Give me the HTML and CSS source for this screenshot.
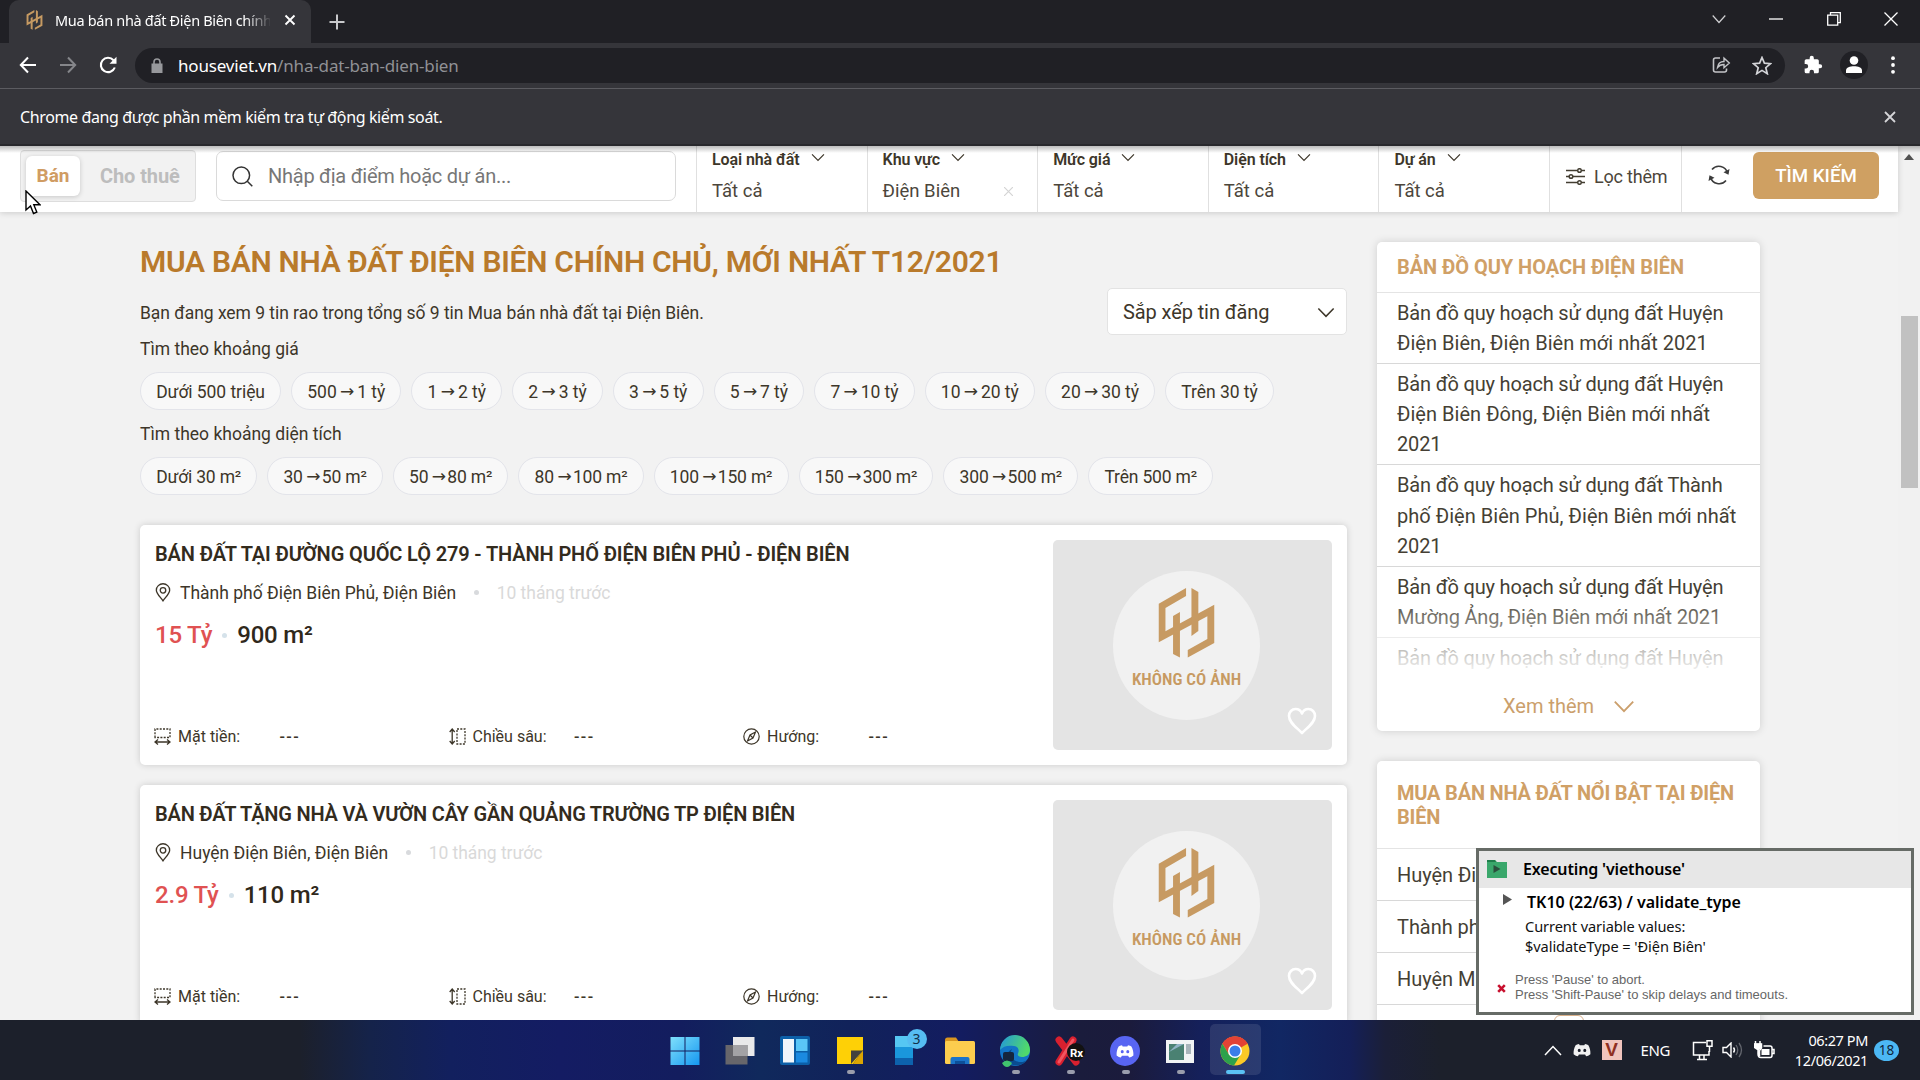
FILE: index.html
```html
<!DOCTYPE html>
<html lang="vi">
<head>
<meta charset="utf-8">
<title>Mua bán nhà đất Điện Biên chính chủ</title>
<link rel="stylesheet" href="styles.css">
</head>
<body>
<svg class="defs" aria-hidden="true">
  <symbol id="logo" viewBox="0 0 55.5 70"><path d="M27.3 0 0 15.700V54.300L48.600 28.300V51L29 62v7.500L55.500 55V16.700L6.700 43.300V20L27.300 8z"/><path d="M14.300 28l6.900-4v45.500l-6.900-3.500z"/><path d="M32.700 0l6.900 4v39l-6.900 5z"/></symbol>
  <symbol id="chev" viewBox="0 0 20 12"><path d="M1.5 1.5 10 10.3 18.5 1.5" fill="none" stroke="currentColor" stroke-width="1.7"/></symbol>
  <symbol id="pin" viewBox="0 0 16 20"><path d="M8 18.800C5 14.600 1 11 1 7.500a7 6.700 0 0 1 14 0C15 11 11 14.600 8 18.800z" fill="none" stroke="currentColor" stroke-width="1.4"/><circle cx="8" cy="7.700" r="2.900" fill="none" stroke="currentColor" stroke-width="1.4"/></symbol>
  <symbol id="front" viewBox="0 0 17 17"><path d="M1 9.500V1h15v8.500z" fill="none" stroke="currentColor" stroke-width="1.3" stroke-dasharray="2 1.300"/><path d="M1 14h15M4 11.500 1 14l3 2.500M13 11.500l3 2.500-3 2.500" fill="none" stroke="currentColor" stroke-width="1.300"/></symbol>
  <symbol id="depth" viewBox="0 0 17 17"><path d="M8 1h8v15H8z" fill="none" stroke="currentColor" stroke-width="1.3" stroke-dasharray="2 1.300"/><path d="M3.200 1v15M.7 4l2.500-3 2.500 3M.7 13l2.500 3 2.500-3" fill="none" stroke="currentColor" stroke-width="1.300"/></symbol>
  <symbol id="compass" viewBox="0 0 17 17"><circle cx="8.500" cy="8.500" r="7.700" fill="none" stroke="currentColor" stroke-width="1.200"/><path d="M12.500 4 7 7l-2.500 6L10 10zM7 7l3 3" fill="none" stroke="currentColor" stroke-width="1.200"/></symbol>
  <symbol id="heart" viewBox="0 0 30 28"><path d="M15 26C9 20 2 15.500 2 9c0-4 3-7 6.500-7C11.500 2 14 4 15 6.500 16 4 18.500 2 21.500 2 25 2 28 5 28 9c0 6.500-7 11-13 17z" fill="none" stroke="#fff" stroke-width="2.600" stroke-linejoin="round"/></symbol>
  <symbol id="discord" viewBox="0 0 24 18"><path d="M8 1C6 1.300 4.500 2 3.500 2.500 1.500 6 .5 10 .8 14.500c2 1.600 4 2.400 5.700 2.800l1.400-2.200h8.200l1.400 2.200c1.700-.4 3.700-1.200 5.700-2.800.3-4.500-.7-8.500-2.700-12C19.500 2 18 1.300 16 1l-.9 1.700H8.900zM8.300 7.300a2 2.200 0 1 1 0 4.400 2 2.200 0 0 1 0-4.400zm7.400 0a2 2.200 0 1 1 0 4.400 2 2.200 0 0 1 0-4.400z" fill-rule="evenodd"/></symbol>
</svg>

<div class="tabstrip">
  <div class="tab">
    <svg class="tab-logo" width="17" height="20"><use href="#logo"/></svg>
    <span class="tab-title">Mua bán nhà đất Điện Biên chính</span>
    <svg width="12" height="12" viewBox="0 0 12 12"><path d="m1.500 1.500 9 9m0-9-9 9" stroke="#fff" stroke-width="1.900"/></svg>
  </div>
  <svg class="newtab" width="16" height="16" viewBox="0 0 16 16"><path d="M8 .5v15M.5 8h15" stroke="#c8c9cc" stroke-width="2"/></svg>
  <div class="wincontrols">
    <svg width="14" height="14" viewBox="0 0 14 14"><path d="m.7 3.500 6.300 7 6.300-7" fill="none" stroke="#d0d0d3" stroke-width="1.200"/></svg>
    <svg width="14" height="14" viewBox="0 0 14 14"><path d="M0 7h14" stroke="#fff" stroke-width="1.300"/></svg>
    <svg width="14" height="14" viewBox="0 0 14 14"><path d="M.7 3.200h10v10h-10zM3.500 3V.7h9.800v10H11" fill="none" stroke="#fff" stroke-width="1.300"/></svg>
    <svg width="14" height="14" viewBox="0 0 14 14"><path d="m.5.5 13 13m0-13-13 13" stroke="#fff" stroke-width="1.300"/></svg>
  </div>
</div>

<div class="toolbar">
  <div class="nav">
    <svg width="18" height="18" viewBox="0 0 18 18"><path d="M17 9H2m7-7.500L1.800 9 9 16.500" fill="none" stroke="#fff" stroke-width="2"/></svg>
    <svg width="18" height="18" viewBox="0 0 18 18"><path d="M1 9h15M9 1.500 16.200 9 9 16.500" fill="none" stroke="#85868a" stroke-width="2"/></svg>
    <svg width="18" height="18" viewBox="0 0 18 18"><path d="M15.800 11.500A7.200 7.200 0 1 1 14.500 4.200" fill="none" stroke="#fff" stroke-width="2.100"/><path d="M17.500.8v7h-7z" fill="#fff"/></svg>
  </div>
  <div class="omnibox">
    <svg width="12" height="15" viewBox="0 0 12 15"><path d="M.5 5.500h11V15H.5z" fill="#97989c"/><path d="M3 6V4a3 3 0 0 1 6 0v2" fill="none" stroke="#97989c" stroke-width="1.600"/></svg>
    <span class="url"><b>houseviet.vn</b>/nha-dat-ban-dien-bien</span>
    <svg class="share" width="19" height="18" viewBox="0 0 19 18"><path d="M8 2H3.500Q1.500 2 1.500 4v10q0 2 2 2h9q2 0 2-2v-1.500" fill="none" stroke="#c3c4c8" stroke-width="1.600"/><path d="M5.500 11.500C6 7.500 8.500 5.500 12 5.500V2.200l5.300 4.800-5.300 4.700V8.500c-3 0-5 1-6.500 3z" fill="none" stroke="#c3c4c8" stroke-width="1.400"/></svg>
    <svg width="20" height="19" viewBox="0 0 20 19"><path d="m10 1.500 2.400 5.700 6.100.5-4.700 4 1.500 6-5.300-3.300-5.300 3.300 1.500-6-4.700-4 6.100-.5z" fill="none" stroke="#d3d4d8" stroke-width="1.700"/></svg>
  </div>
  <svg class="ext" width="20" height="20" viewBox="0 0 24 24"><path fill="#fff" d="M20.500 11H19V7a2 2 0 0 0-2-2h-4V3.500a2.500 2.500 0 0 0-5 0V5H4a2 2 0 0 0-2 2v3.800h1.500a2.700 2.700 0 0 1 0 5.400H2V20a2 2 0 0 0 2 2h3.800v-1.500a2.700 2.700 0 0 1 5.400 0V22H17a2 2 0 0 0 2-2v-4h1.500a2.500 2.500 0 0 0 0-5z"/></svg>
  <div class="avatar"><svg width="16" height="18" viewBox="0 0 16 18"><circle cx="8" cy="4.500" r="4.300" fill="#fff"/><path d="M0 17v-2.500C0 11.500 4 10.300 8 10.300s8 1.200 8 4.200V17z" fill="#fff"/></svg></div>
  <svg class="dots" width="4" height="18" viewBox="0 0 4 18"><circle cx="2" cy="2.200" r="1.900" fill="#fff"/><circle cx="2" cy="9" r="1.900" fill="#fff"/><circle cx="2" cy="15.800" r="1.900" fill="#fff"/></svg>
</div>

<div class="infobar">
  <span>Chrome đang được phần mềm kiểm tra tự động kiểm soát.</span>
  <svg width="12" height="12" viewBox="0 0 12 12"><path d="m1 1 10 10m0-10L1 11" stroke="#d5d5d8" stroke-width="1.800"/></svg>
</div>

<div class="viewport">
  <div class="page">
    <header class="search">
      <div class="toggle"><span class="on">Bán</span><span class="off">Cho thuê</span></div>
      <div class="query">
        <svg width="21" height="21" viewBox="0 0 21 21"><circle cx="9.300" cy="9.300" r="8.300" fill="none" stroke="#333" stroke-width="1.500"/><path d="m15.300 15.300 5 5" stroke="#333" stroke-width="1.500"/></svg>
        <span>Nhập địa điểm hoặc dự án...</span>
      </div>
      <div class="filter first"><div class="fl">Loại nhà đất<svg width="14" height="9"><use href="#chev"/></svg></div><div class="fv">Tất cả</div></div>
      <div class="filter"><div class="fl">Khu vực<svg width="14" height="9"><use href="#chev"/></svg></div><div class="fv">Điện Biên<svg class="clear" width="9" height="9" viewBox="0 0 9 9"><path d="m0 0 9 9m0-9L0 9" stroke="#d4d4d4" stroke-width="1.200"/></svg></div></div>
      <div class="filter"><div class="fl">Mức giá<svg width="14" height="9"><use href="#chev"/></svg></div><div class="fv">Tất cả</div></div>
      <div class="filter"><div class="fl">Diện tích<svg width="14" height="9"><use href="#chev"/></svg></div><div class="fv">Tất cả</div></div>
      <div class="filter"><div class="fl">Dự án<svg width="14" height="9"><use href="#chev"/></svg></div><div class="fv">Tất cả</div></div>
      <div class="more">
        <svg width="19" height="17" viewBox="0 0 19 17"><g fill="none" stroke="#433e32" stroke-width="1.500"><path d="M0 2.500h11.500M15.500 2.500H19M0 8.500h3M7 8.500h12M0 14.500h11.500M15.500 14.500H19"/><circle cx="13.500" cy="2.500" r="1.800"/><circle cx="5" cy="8.500" r="1.800"/><circle cx="13.500" cy="14.500" r="1.800"/></g></svg>
        Lọc thêm
      </div>
      <div class="reset">
        <svg width="22" height="22" viewBox="0 0 22 22"><g fill="none" stroke="#3b3b3b" stroke-width="1.600"><path d="M4 5.500A8.900 8.900 0 0 1 19.500 9M18 16.500A8.900 8.900 0 0 1 2.500 13"/></g><path d="m21.500 5-1 5.800-5-2.600zM.5 17l1-5.800 5 2.600z" fill="#3b3b3b"/></svg>
      </div>
      <div class="go">TÌM KIẾM</div>
    </header>

    <div class="content">
      <main>
        <h1>MUA BÁN NHÀ ĐẤT ĐIỆN BIÊN CHÍNH CHỦ, MỚI NHẤT T12/2021</h1>
        <div class="sub"><p>Bạn đang xem 9 tin rao trong tổng số 9 tin Mua bán nhà đất tại Điện Biên.</p>
          <div class="sort">Sắp xếp tin đăng<svg width="18" height="11"><use href="#chev"/></svg></div></div>
        <p class="lead">Tìm theo khoảng giá</p>
        <div class="chips price-chips"><span>Dưới 500 triệu</span><span>500<i>→</i>1 tỷ</span><span>1<i>→</i>2 tỷ</span><span>2<i>→</i>3 tỷ</span><span>3<i>→</i>5 tỷ</span><span>5<i>→</i>7 tỷ</span><span>7<i>→</i>10 tỷ</span><span>10<i>→</i>20 tỷ</span><span>20<i>→</i>30 tỷ</span><span>Trên 30 tỷ</span></div>
        <p class="lead second">Tìm theo khoảng diện tích</p>
        <div class="chips"><span>Dưới 30 m²</span><span>30<i>→</i>50 m²</span><span>50<i>→</i>80 m²</span><span>80<i>→</i>100 m²</span><span>100<i>→</i>150 m²</span><span>150<i>→</i>300 m²</span><span>300<i>→</i>500 m²</span><span>Trên 500 m²</span></div>

        <article class="card">
          <div class="info">
            <h2>BÁN ĐẤT TẠI ĐƯỜNG QUỐC LỘ 279 - THÀNH PHỐ ĐIỆN BIÊN PHỦ - ĐIỆN BIÊN</h2>
            <div class="loc"><svg width="16" height="19"><use href="#pin"/></svg>Thành phố Điện Biên Phủ, Điện Biên<i></i><em>10 tháng trước</em></div>
            <div class="price"><b>15 Tỷ</b><i></i>900 m²</div>
            <div class="feats">
              <div><svg width="17" height="17"><use href="#front"/></svg><span>Mặt tiền:</span><b>---</b></div>
              <div><svg width="17" height="17"><use href="#depth"/></svg><span>Chiều sâu:</span><b>---</b></div>
              <div><svg width="17" height="17"><use href="#compass"/></svg><span>Hướng:</span><b>---</b></div>
            </div>
          </div>
          <div class="photo"><div class="disc"><svg width="57" height="70"><use href="#logo"/></svg><span>KHÔNG CÓ ẢNH</span></div><svg class="fav" width="30" height="28"><use href="#heart"/></svg></div>
        </article>

        <article class="card">
          <div class="info">
            <h2 class="tight">BÁN ĐẤT TẶNG NHÀ VÀ VƯỜN CÂY GẦN QUẢNG TRƯỜNG TP ĐIỆN BIÊN</h2>
            <div class="loc"><svg width="16" height="19"><use href="#pin"/></svg>Huyện Điện Biên, Điện Biên<i></i><em>10 tháng trước</em></div>
            <div class="price"><b>2.9 Tỷ</b><i></i>110 m²</div>
            <div class="feats">
              <div><svg width="17" height="17"><use href="#front"/></svg><span>Mặt tiền:</span><b>---</b></div>
              <div><svg width="17" height="17"><use href="#depth"/></svg><span>Chiều sâu:</span><b>---</b></div>
              <div><svg width="17" height="17"><use href="#compass"/></svg><span>Hướng:</span><b>---</b></div>
            </div>
          </div>
          <div class="photo"><div class="disc"><svg width="57" height="70"><use href="#logo"/></svg><span>KHÔNG CÓ ẢNH</span></div><svg class="fav" width="30" height="28"><use href="#heart"/></svg></div>
        </article>
      </main>

      <aside>
        <section class="box">
          <h3>BẢN ĐỒ QUY HOẠCH ĐIỆN BIÊN</h3>
          <ul class="maps">
            <li>Bản đồ quy hoạch sử dụng đất Huyện<br><span class="loose">Điện Biên, Điện Biên mới nhất 2021</span></li>
            <li>Bản đồ quy hoạch sử dụng đất Huyện<br><span class="loose">Điện Biên Đông, Điện Biên mới nhất</span><br>2021</li>
            <li>Bản đồ quy hoạch sử dụng đất Thành<br><span class="loose">phố Điện Biên Phủ, Điện Biên mới nhất</span><br>2021</li>
            <li>Bản đồ quy hoạch sử dụng đất Huyện<br>Mường Ảng, Điện Biên mới nhất 2021</li>
            <li>Bản đồ quy hoạch sử dụng đất Huyện</li>
          </ul>
          <div class="expand">Xem thêm<svg width="22" height="13"><use href="#chev"/></svg></div>
        </section>
        <section class="box hot">
          <h3>MUA BÁN NHÀ ĐẤT NỔI BẬT TẠI ĐIỆN<br>BIÊN</h3>
          <ul>
            <li>Huyện Điện Biên</li>
            <li>Thành phố Điện Biên Phủ</li>
            <li>Huyện Mường Ảng</li>
          </ul>
          <div class="pager"></div>
        </section>
      </aside>
    </div>
  </div>
  <div class="scroll"><svg width="10" height="6" viewBox="0 0 10 6"><path d="m0 6 5-6 5 6z" fill="#505050"/></svg><div class="thumb"></div></div>
</div>

<footer class="taskbar">
  <div class="apps">
    <div><svg width="30" height="30" viewBox="0 0 30 30"><defs><linearGradient id="w" x1="0" y1="0" x2="1" y2="1"><stop offset="0" stop-color="#7fe0fc"/><stop offset="1" stop-color="#1597f0"/></linearGradient></defs><path d="M.5 1h14v13.500H.5zM15.500 1h14v13.500h-14zM.5 15.500h14V29H.5zM15.500 15.500h14V29h-14z" fill="url(#w)"/></svg></div>
    <div><svg width="30" height="30" viewBox="0 0 30 30"><path d="M8 1h21.500v19H8z" fill="#e9e9ea"/><path d="M.5 9h22v19.500H.5z" fill="#67666b"/><path d="M8 9h14.500v11H8z" fill="#a3a2a5"/></svg></div>
    <div><svg width="30" height="30" viewBox="0 0 30 30"><rect width="30" height="29" rx="2" fill="#0c5fa8"/><path d="M3 3h11v23.500H3z" fill="#f1f6fb"/><path d="M16 3h11.500v12H16z" fill="#5ac6f7"/><path d="M16 16.500h11.500v10H16z" fill="#1b8ae0"/></svg></div>
    <div><svg width="30" height="30" viewBox="0 0 30 30"><path d="M2 1h26v13l-10 14H2z" fill="#fed006"/><path d="M28 14v14H18z" fill="#dba502"/><path d="M16 14.500h12L16 28z" fill="#41423f"/></svg><s></s></div>
    <div><svg width="32" height="34" viewBox="0 0 32 34"><path d="M6 2h18v12H6z" fill="#56c7f3"/><path d="M6 13h18v13H6z" fill="#1a97dc"/><path d="M6 24h18v7H6z" fill="#0d62ad"/></svg><span class="count">3</span></div>
    <div><svg width="30" height="30" viewBox="0 0 30 30"><path d="M0 4q0-2.500 2.500-2.500H11L14 6v4H0z" fill="#d9961f"/><rect y="5" width="30" height="23" rx="1.500" fill="#fdcd4e"/><path d="M5.500 28v-5q0-2 2-2h15q2 0 2 2v5z" fill="#1b74c9"/><path d="M10 25h10v3H10z" fill="#0d4f99"/></svg></div>
    <div><svg width="32" height="32" viewBox="0 0 32 32"><defs><linearGradient id="e" x1="0" y1="0" x2="1" y2=".3"><stop offset="0" stop-color="#2296dc"/><stop offset="1" stop-color="#50d96b"/></linearGradient></defs><circle cx="16" cy="16" r="15" fill="#1275c6"/><path d="M1 15A15 15 0 0 1 31 15c0 5-4 7-8 7-3 0-5-1.500-4-3.500 1.500-3 .5-7-4-7.500C9 10 4 11 1 15z" fill="url(#e)"/><path d="M13 14c-3 5 0 12 7 13 4 .5 7-1 8-2-4 6-13 7-18 3-5-4-3-11 3-14z" fill="#0a4b8f"/><rect x="4" y="17" width="11" height="9" rx="2" fill="#15263d"/><path d="M3 28q5-5 10 0-2 4-5 4t-5-4z" fill="#41c46e"/></svg><s></s></div>
    <div><svg width="32" height="30" viewBox="0 0 32 30"><path d="m5 4 17 22M19 4 5 26" stroke="#d9202f" stroke-width="7" stroke-linecap="round"/><path d="M19 4 5 26" stroke="#f05560" stroke-width="3" stroke-linecap="round"/><circle cx="22" cy="16" r="9" fill="#121212"/><text x="16" y="20.500" font-family="Roboto, sans-serif" font-size="11.500" font-weight="700" fill="#fff">Rx</text></svg><s></s></div>
    <div><svg width="30" height="30" viewBox="0 0 30 30"><circle cx="15" cy="15" r="15" fill="#5865f2"/><use href="#discord" x="6" y="8.500" width="18" height="13.500" fill="#fff"/></svg><s></s></div>
    <div><svg width="28" height="26" viewBox="0 0 28 26"><path d="M0 2h28v23H0z" fill="#f1f3f4"/><path d="M3 6h15v16H3z" fill="#4a8172"/><path d="m3 14 8-8h7z" fill="#8fb3c4"/><path d="M20 6h5v10h-5z" fill="#a8b4ba"/></svg><s></s></div>
    <div class="active"><svg width="30" height="30" viewBox="0 0 30 30"><circle cx="15" cy="15" r="14.500" fill="#fbc926"/><path d="M15 15 2.400 7.800a14.500 14.500 0 0 1 25.200 0z" fill="#e34235"/><path d="M15 8h12.700A14.500 14.500 0 0 0 2.400 7.800L9 18.500z" fill="#e34235"/><path d="M2.400 7.800A14.500 14.500 0 0 0 14 29.500l7-11.500-12 .5z" fill="#2da14c"/><circle cx="15" cy="15" r="7" fill="#fff"/><circle cx="15" cy="15" r="5.500" fill="#3b7de9"/></svg><s></s></div>
  </div>
  <div class="tray">
    <svg width="18" height="11" viewBox="0 0 18 11"><path d="m1 10 8-8.500 8 8.500" fill="none" stroke="#fff" stroke-width="1.500"/></svg>
    <svg class="t-disc" width="18" height="14" fill="#f1f1f1"><use href="#discord"/></svg>
    <span class="vkey">V</span>
    <span class="lang">ENG</span>
    <svg class="t-net" width="21" height="21" viewBox="0 0 21 21"><path d="M14 2.500H1.500V15H17v-4M5 19.500h10M7.500 15v4M12 15v4" fill="none" stroke="#fff" stroke-width="1.500"/><path d="M15 .7h5v5.500h-5zM17.500 6v6" fill="none" stroke="#fff" stroke-width="1.500"/></svg>
    <svg class="t-vol" width="21" height="16" viewBox="0 0 21 16"><path d="M1 5.500h3.500L9 1v14l-4.500-4.500H1z" fill="none" stroke="#fff" stroke-width="1.400"/><path d="M11.500 5.500q2 2.500 0 5" fill="none" stroke="#fff" stroke-width="1.400"/><path d="M14 3q3.500 5 0 10M17 1q5 7 0 14" fill="none" stroke="#63666e" stroke-width="1.300"/></svg>
    <svg class="t-bat" width="21" height="18" viewBox="0 0 21 18"><path d="M1.500 0v3M6 0v3M0 3h7.500v4l-2 2.500V15M4 9v4q0 3.500 3 3.500h9q2 0 2-2V7q0-2-2-2H9.500M18.500 8.500H20v4h-1.500" fill="none" stroke="#fff" stroke-width="1.500"/><path d="M0 2.500h7.500V7L5 9H3L0 7zM7.500 8h8v6h-8z" fill="#fff"/></svg>
    <div class="clock"><span>06:27 PM</span><span>12/06/2021</span></div>
    <span class="notif">18</span>
  </div>
</footer>

<div class="popup">
  <div class="phead"><svg width="20" height="18" viewBox="0 0 20 18"><path d="M0 0h8l2 2h10v16H0z" fill="#3aa76b"/><path d="M0 0h8l1 2H0z" fill="#1f7d4b"/><path d="M6.500 5v8l7-4z" fill="#2a4f3c"/></svg><b>Executing 'viethouse'</b></div>
  <div class="pstep"><svg width="9" height="11" viewBox="0 0 9 11"><path d="M0 0v11l9-5.500z" fill="#555"/></svg><b>TK10 (22/63) / validate_type</b></div>
  <div class="pvars">Current variable values:<br>$validateType = 'Điện Biên'</div>
  <div class="phint"><svg width="9" height="9" viewBox="0 0 9 9"><path d="m1.200 1.200 6.600 6.600m0-6.600L1.200 7.800" stroke="#c8102e" stroke-width="2.600"/></svg><p>Press 'Pause' to abort.<br>Press 'Shift-Pause' to skip delays and timeouts.</p></div>
</div>
<svg class="cursor" width="16" height="25" viewBox="0 0 16 25"><path d="M1 1v19l4.500-4 3 7.500 3.300-1.400-3-7.300H15z" fill="#fff" stroke="#000" stroke-width="1.400"/></svg>
</body>
</html>
```
FILE: styles.css
```css
* { box-sizing: border-box; }
body {
  margin: 0; width: 1920px; height: 1080px; overflow: hidden;
  display: flex; flex-direction: column; position: relative;
  font-family: "Roboto", sans-serif; color: #3d3629; background: #f2f2f2;
}
h1, h2, h3, p, ul { margin: 0; padding: 0; }
ul { list-style: none; }
svg { flex: none; display: block; }
.defs { position: absolute; width: 0; height: 0; }

/* browser chrome */
.tabstrip, .toolbar, .infobar, .taskbar, .popup { font-family: "Noto Sans", "Open Sans", sans-serif; }
.tabstrip { height: 43px; background: #202025; display: flex; align-items: center; flex: none; }
.tab {
  width: 302px; height: 43px; margin-left: 9px; padding: 0 15px 3px 17px; background: #35353a;
  border-radius: 10px 10px 0 0; display: flex; align-items: center;
}
.tab-logo { fill: #c69a62; }
.tab-title {
  margin-left: 12px; width: 217px; margin-right: 14px; font-size: 14.5px; letter-spacing: -.32px;
  color: #fff; white-space: nowrap; overflow: hidden;
  -webkit-mask-image: linear-gradient(90deg, #000 88%, transparent 101%);
  mask-image: linear-gradient(90deg, #000 88%, transparent 101%);
}
.newtab { margin-left: 18px; }
.wincontrols { margin-left: auto; padding-right: 22px; padding-bottom: 6px; display: flex; gap: 43.3px; }
.toolbar { height: 45px; background: #35353a; display: flex; align-items: center; flex: none; padding-bottom: 1px; }
.nav { display: flex; gap: 22px; padding-left: 19px; width: 135px; }
.omnibox {
  width: 1650px; height: 35px; border-radius: 18px; background: #202025;
  display: flex; align-items: center; padding: 0 13px 0 16px;
}
.url { margin-left: 15px; font-size: 17px; letter-spacing: -.17px; color: #909195; }
.url b { font-weight: 400; color: #fff; }
.share { margin-left: auto; margin-right: 21px; }
.ext { margin-left: 18px; }
.avatar {
  width: 28px; height: 28px; margin-left: 17px; border-radius: 50%; background: #202025;
  display: flex; align-items: center; justify-content: center;
}
.dots { margin-left: 23px; }
.infobar {
  height: 58px; flex: none; background: #35353a; border-top: 1px solid #5c5c61; border-bottom: 2px solid #29292d;
  display: flex; align-items: center; justify-content: space-between; padding: 0 24px 0 20px;
  color: #fff; font-size: 16px; letter-spacing: -.38px;
}

/* web page */
.viewport { height: 874px; flex: none; display: flex; overflow: hidden; position: relative; }
.viewport::before {
  content: ""; position: absolute; left: 0; top: 0; right: 0; height: 7px; z-index: 2;
  background: linear-gradient(rgba(0,0,0,.26), transparent);
}
.page { width: 1898px; flex: none; }
.search {
  height: 66px; background: #fff; display: flex; align-items: stretch; position: relative; z-index: 1;
  box-shadow: 0 1px 6px rgba(0,0,0,.16);
}
.toggle {
  width: 176px; height: 52px; margin: 4px 20px 0 20px; border: 1px solid #dedede; border-radius: 4px;
  background: #f2f2f2; display: flex; align-items: center; padding-left: 5px; font-size: 20px; font-weight: 700;
}
.toggle .on {
  width: 54px; height: 40px; background: #fff; border-radius: 6px; color: #d09c63; text-align: center;
  line-height: 40px; font-size: 19px; box-shadow: 0 1px 5px rgba(0,0,0,.18);
}
.toggle .off { margin-left: 20px; color: #bdbdbd; letter-spacing: -.1px; }
.query {
  width: 460px; height: 50px; margin-top: 5px; border: 1px solid #dadada; border-radius: 7px;
  display: flex; align-items: center; gap: 15px; padding-left: 15px; color: #777; font-size: 20px; letter-spacing: -.26px;
}
.filter { width: 170.6px; border-left: 1px solid #e0e0e0; padding-left: 15px; }
.filter.first { margin-left: 20px; }
.fl { display: flex; align-items: center; height: 26px; font-size: 16px; font-weight: 600; letter-spacing: -.1px; }
.fl svg { margin-left: 11px; margin-bottom: 3px; }
.fv { display: flex; align-items: center; height: 38px; font-size: 18.5px; color: #4c463b; }
.clear { margin-left: auto; margin-right: 24px; }
.more {
  width: 133px; border-left: 1px solid #e0e0e0; border-right: 1px solid #e0e0e0; display: flex; align-items: center;
  padding: 0 0 5px 16px; gap: 9px; font-size: 18px; letter-spacing: -.2px; white-space: nowrap; color: #4c463b;
}
.reset { width: 71px; display: flex; align-items: center; padding: 0 0 8px 26px; }
.go {
  width: 126px; height: 47px; margin-top: 6px; border-radius: 6px; background: #cfa062; color: #fff;
  display: flex; align-items: center; justify-content: center; padding-top: 1px; font-size: 18.7px; font-weight: 500;
}
.content { display: flex; gap: 30px; padding-left: 140px; }
main { width: 1207px; flex: none; }
h1 { margin-top: 26px; height: 50px; font-size: 30px; line-height: 48px; font-weight: 600; letter-spacing: -.28px; color: #b97a2b; white-space: nowrap; }
.sub { display: flex; justify-content: space-between; align-items: center; height: 46px; font-size: 17.5px; letter-spacing: -.04px; }
.sub p { padding-top: 3px; }
.sort {
  width: 240px; height: 47px; background: #fff; border: 1px solid #e3e3e3; border-radius: 5px;
  display: flex; align-items: center; justify-content: space-between; padding: 2px 11px 0 15px; font-size: 20px; letter-spacing: -.1px;
}
.lead { height: 38px; line-height: 30px; font-size: 17.5px; }
.lead.second { margin-top: 9px; }
.chips { display: flex; gap: 10px; }
.chips span {
  height: 38px; padding: 2px 15.2px 0; border: 1px solid #e3e4ea; border-radius: 19px; background: #f8f8f8;
  display: flex; align-items: center; font-size: 17.5px; letter-spacing: -.18px; white-space: pre;
}
.chips i { font: 400 17px "DejaVu Sans", sans-serif; margin: 0 1px 2px 3px; width: 15px; text-align: center; }
.price-chips span { letter-spacing: -.06px; }
.price-chips i { margin: 0 2.6px 2px 3px; }
.card {
  width: 1207px; height: 240px; margin-top: 20px; background: #fff; border-radius: 5px; display: flex;
  padding: 15px; box-shadow: 0 0 7px rgba(0,0,0,.16);
}
.chips + .card { margin-top: 30px; }
.info { flex: 1; display: flex; flex-direction: column; padding-top: 1px; }
h2 { font-size: 20px; line-height: 26px; font-weight: 600; letter-spacing: -.13px; color: #332b1d; white-space: nowrap; }
h2.tight { letter-spacing: -.2px; }
.loc { display: flex; align-items: center; height: 26px; margin-top: 12px; padding-top: 1px; font-size: 17.5px; }
.loc svg { margin-right: 9px; margin-top: -1px; }
.loc i { width: 5px; height: 5px; border-radius: 50%; background: #d8dadd; margin: 0 17.5px 0 18px; }
.loc em { font-style: normal; color: #d9d9d9; letter-spacing: -.05px; }
.price { display: flex; align-items: center; height: 30px; margin-top: 15px; font-size: 24px; font-weight: 500; letter-spacing: -.2px; color: #2f281b; }
.price b { color: #e05252; font-weight: 500; }
.price i { width: 5px; height: 5px; border-radius: 50%; background: #d5e2ea; margin: 0 10px 0 10px; }
.feats { display: flex; margin-top: 74px; height: 24px; font-size: 16px; }
.feats div { width: 294.5px; display: flex; align-items: center; }
.feats svg { margin-right: 7px; margin-left: -1px; }
.feats span { width: 101.5px; }
.feats b { font-weight: 500; letter-spacing: 1.4px; }
.photo {
  width: 279px; height: 210px; border-radius: 5px; background: #e4e4e4; position: relative;
  display: flex; align-items: center; justify-content: center; padding-right: 12px;
}
.disc {
  width: 147px; height: 149px; border-radius: 50%; background: #f1f1f1; display: flex; flex-direction: column;
  align-items: center; padding-top: 17px;
}
.disc svg { fill: #c79a62; }
.disc span { margin-top: 10px; font-size: 17px; line-height: 22px; font-weight: 600; font-stretch: 85%; color: #c79a62; white-space: nowrap; }
.fav { position: absolute; right: 15px; bottom: 15px; }

/* sidebar */
aside { width: 383px; flex: none; padding-top: 30px; font-size: 20px; letter-spacing: -.17px; }
.box { background: #fff; border-radius: 5px; height: 489px; box-shadow: 0 0 9px rgba(0,0,0,.15); color: #453f34; }
.box h3 { height: 51px; border-bottom: 1px solid #e4e4e4; padding-left: 20px; font-size: 20px; line-height: 51px; letter-spacing: -.05px; color: #d0a066; white-space: nowrap; }
.box li { padding: 5px 0 5px 20px; line-height: 30.1px; border-bottom: 1px solid #d8d8d8; white-space: nowrap; }
.loose { letter-spacing: .03px; }
.maps { height: 376px; overflow: hidden; position: relative; }
.maps::after { content: ""; position: absolute; left: 0; right: 0; bottom: 0; height: 66px; background: linear-gradient(rgba(255,255,255,.1), rgba(255,255,255,.9)); }
.expand { height: 62px; display: flex; align-items: center; gap: 19px; padding: 12px 0 0 126px; color: #cb9f6c; letter-spacing: 0; }
.box.hot { margin-top: 30px; height: 300px; }
.box.hot h3 { height: 88px; line-height: 24px; padding-top: 20px; letter-spacing: -.2px; }
.box.hot li { padding: 10.5px 0 10.5px 20px; line-height: 30px; letter-spacing: -.05px; }
.pager { width: 30px; height: 30px; margin: 10px 0 0 177px; border: 1px solid #d9b08a; border-radius: 6px; }
.scroll { width: 22px; background: #f1f1f1; display: flex; flex-direction: column; align-items: center; padding-top: 8px; }
.thumb { width: 17px; height: 172px; margin-top: 156px; background: #c1c1c1; }

/* taskbar */
.taskbar {
  height: 60px; flex: none; display: flex; position: relative; color: #fff;
  background: linear-gradient(90deg, #1c202b 0, #1c202b 300px, #15234a 370px, #12205e 450px, #141c63 560px, #131d5e 680px, #10295c 760px, #11225a 850px, #131c60 960px, #1a1c3c 1080px, #1b1b3c 1130px, #15205a 1200px, #112763 1280px, #141f58 1350px, #1b1f38 1385px, #1c202b 1440px);
}
.apps { display: flex; margin-left: 657.5px; padding-top: 4px; }
.apps div { width: 55px; height: 51px; display: flex; align-items: center; justify-content: center; position: relative; padding-top: 2px; }
.apps .active::before { content: ""; position: absolute; inset: 0 2px; border-radius: 5px; background: rgba(255,255,255,.1); }
.apps svg { position: relative; }
.apps s { position: absolute; bottom: 1px; left: 24px; width: 8px; height: 4px; border-radius: 2px; background: #9a9dac; }
.apps .active s { left: 18px; width: 19px; background: #5ac2f5; }
.count { position: absolute; left: 29px; top: 5px; width: 20px; height: 20px; border-radius: 50%; background: #56bdf2; color: #12304a; font-size: 14px; line-height: 20px; text-align: center; }
.tray { margin-left: auto; display: flex; align-items: center; padding-right: 21px; }
.t-disc { margin-left: 11px; }
.vkey { width: 20px; height: 20px; margin-left: 11px; background: #f0c4bd; color: #8f2f22; font: 700 19px/20px "Liberation Sans", sans-serif; text-align: center; }
.lang { margin-left: 19px; font-size: 15px; letter-spacing: -.4px; }
.t-net { margin-left: 22px; }
.t-vol { margin-left: 9px; }
.t-bat { margin-left: 11px; }
.clock { margin-left: 18px; width: 75px; display: flex; flex-direction: column; align-items: flex-end; font-size: 14.5px; line-height: 20px; letter-spacing: -.4px; }
.notif { width: 25px; height: 21px; margin-left: 6px; border-radius: 50%; background: #4cb8f5; color: #10263c; font-size: 13.5px; line-height: 21px; text-align: center; }

/* test runner popup */
.popup { position: absolute; left: 1476px; top: 847.5px; width: 438px; height: 167px; background: #fff; border: 3px solid #666b66; z-index: 5; color: #111; }
.phead { height: 37px; background: #e7e7e7; display: flex; align-items: center; gap: 16px; padding-left: 8px; font-size: 16px; letter-spacing: -.15px; color: #000; }
.popup b { font-weight: 600; }
.pstep { height: 28px; display: flex; align-items: center; gap: 15px; padding-left: 24px; font-size: 16px; color: #000; }
.pstep svg { margin-bottom: 4px; }
.pvars { padding: 0 0 0 46px; font-size: 14.6px; line-height: 20px; letter-spacing: -.08px; }
.phint { display: flex; align-items: center; gap: 9px; margin: 16px 0 0 18px; font: 13px/15px "Liberation Sans", sans-serif; color: #666; }
.phint svg { margin-top: 4px; }
.cursor { position: absolute; left: 25px; top: 190px; z-index: 6; }
```
